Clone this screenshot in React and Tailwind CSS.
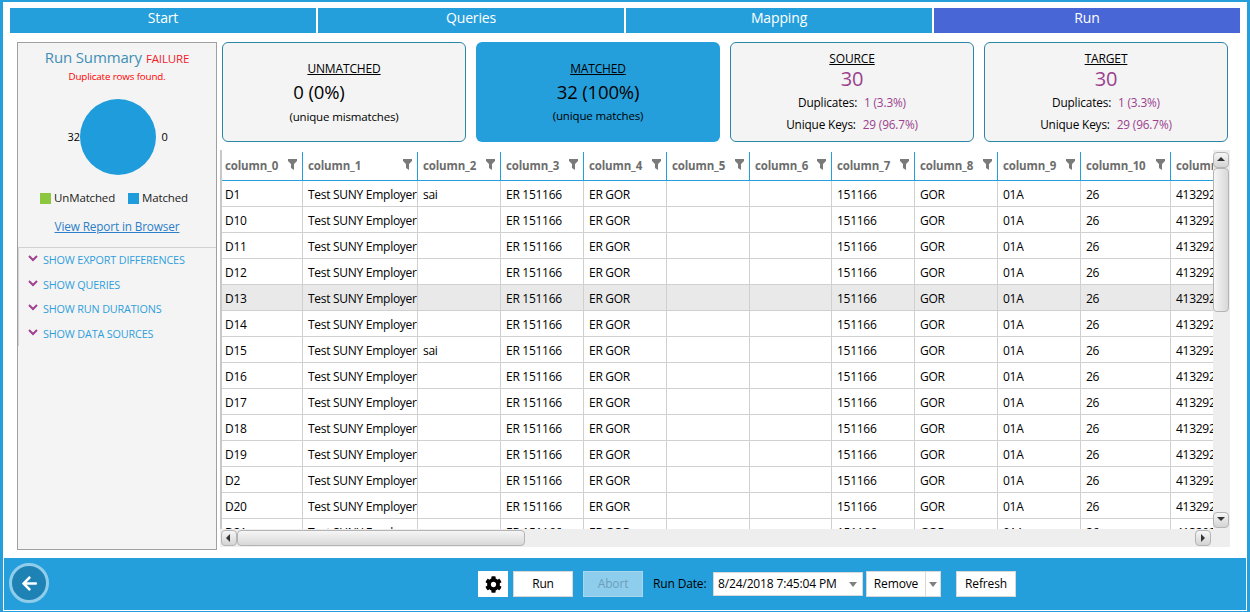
import { FaCog, FaArrowLeft } from "react-icons/fa";

const columns = [
  { name: "column_0", w: "w-[81px]" },
  { name: "column_1", w: "w-[115px]" },
  { name: "column_2", w: "w-[83px]" },
  { name: "column_3", w: "w-[83px]" },
  { name: "column_4", w: "w-[83px]" },
  { name: "column_5", w: "w-[83px]" },
  { name: "column_6", w: "w-[82px]" },
  { name: "column_7", w: "w-[83px]" },
  { name: "column_8", w: "w-[83px]" },
  { name: "column_9", w: "w-[83px]" },
  { name: "column_10", w: "w-[90px]" },
  { name: "column_11", w: "w-[80px]" },
];

const rowIds = ["D1", "D10", "D11", "D12", "D13", "D14", "D15", "D16", "D17", "D18", "D19", "D2", "D20", "D21"];

function rowCells(id) {
  return [id, "Test SUNY Employer", id === "D1" || id === "D15" ? "sai" : "", "ER 151166", "ER GOR", "", "", "151166", "GOR", "01A", "26", "4132924"];
}

function Funnel() {
  return (
    <svg width="9" height="11" viewBox="0 0 9 11" className="shrink-0">
      <path d="M0 0H9V2L6 5V11L3 9V5L0 2Z" fill="#7a7a7a" />
    </svg>
  );
}

function ScrollButton({ dir }) {
  const points = { up: "1,6 5,2 9,6", down: "1,2 5,6 9,2", left: "6,1 2,5 6,9", right: "3,1 7,5 3,9" };
  return (
    <div className="w-4 h-4 shrink-0 flex items-center justify-center rounded-sm border border-[#b4b4b4] bg-gradient-to-b from-[#f6f6f6] to-[#d4d4d4]">
      <svg width="10" height="10" viewBox="0 0 10 10">
        <polygon points={points[dir]} fill="#333" />
      </svg>
    </div>
  );
}

function StatCard({ title, count }) {
  return (
    <div className="w-[244px] h-[100px] rounded-md border border-[#2b86a6] bg-[#f4f4f4] flex flex-col items-center pt-[7px] text-black">
      <div className="text-[12px] leading-[17px] underline">{title}</div>
      <div className="text-[20px] leading-[24px] text-[#9b3f8e]">{count}</div>
      <div className="text-[11.8px] leading-[22px]">
        Duplicates: <span className="ml-1 text-[#9b3f8e]">1 (3.3%)</span>
      </div>
      <div className="text-[11.8px] leading-[22px]">
        Unique Keys: <span className="ml-1 text-[#9b3f8e]">29 (96.7%)</span>
      </div>
    </div>
  );
}

function Expander({ label }) {
  return (
    <div className="flex items-center h-[24.5px] pl-[9px] text-[10.8px] text-[#2f9fdc]">
      <svg width="10" height="7" viewBox="0 0 10 7" className="mr-[5px] mb-[3px]">
        <path d="M1 1L5 5L9 1" fill="none" stroke="#a0408f" strokeWidth="2" />
      </svg>
      {label}
    </div>
  );
}

function FooterButton({ children, disabled }) {
  return (
    <div className={disabled
      ? "w-[60px] h-[26px] flex items-center justify-center border border-[#a9d6ee] bg-[#8ecdec] text-[#6d9fb9]"
      : "w-[60px] h-[26px] flex items-center justify-center border border-[#d8d8d8] bg-white"}>
      {children}
    </div>
  );
}

export default function App() {
  return (
    <div className="w-[1250px] h-[612px] flex flex-col bg-white border-l-[3px] border-r-[3px] border-t-2 border-b border-[#259fdb] overflow-hidden text-[12px] tracking-[-0.15px] text-black font-['Open_Sans','Noto_Sans',sans-serif]">
      {/* tabs */}
      <div className="flex gap-[2px] mt-[6px] ml-[7px] text-white text-[14px] leading-[20px] text-center">
        <div className="w-[306px] h-[25px] bg-[#259fdb]">Start</div>
        <div className="w-[306px] h-[25px] bg-[#259fdb]">Queries</div>
        <div className="w-[306px] h-[25px] bg-[#259fdb]">Mapping</div>
        <div className="w-[306px] h-[25px] bg-[#4866d6]">Run</div>
      </div>

      <div className="flex mt-[9px] ml-[14px] h-[508px]">
        {/* run summary */}
        <div className="w-[200px] h-[508px] border border-[#a0a0a0] bg-[#f4f4f4] flex flex-col">
          <div className="flex items-baseline justify-center mt-[3px]">
            <span className="text-[15px] leading-[22px] text-[#3f8fb5]">Run Summary</span>
            <span className="ml-1 text-[11.5px] text-[#f01c2c]">FAILURE</span>
          </div>
          <div className="text-center text-[9.8px] leading-[14px] text-[#ff0000] mt-[2px]">Duplicate rows found.</div>
          <div className="flex items-center justify-center mt-[15px] h-[76px] pl-[7px] text-[11px]">
            <span className="w-[12px]">32</span>
            <div className="w-[76px] h-[76px] rounded-full bg-[#1e9cdc]" />
            <span className="w-[12px] ml-[6px]">0</span>
          </div>
          <div className="flex items-center justify-center mt-[16px] pr-[6px] h-[14px] text-[11.5px] text-[#222]">
            <div className="w-[11px] h-[11px] bg-[#8dc63f] mr-[3px]" />
            UnMatched
            <div className="w-[11px] h-[11px] bg-[#1e9cdc] ml-[13px] mr-[3px]" />
            Matched
          </div>
          <div className="text-center mt-[13px] text-[11.8px] leading-[16px] underline text-[#2c7fc9]">View Report in Browser</div>
          <div className="mt-[13px] border-t border-l border-[#d2d2d2] h-[99px]">
            <Expander label="SHOW EXPORT DIFFERENCES" />
            <Expander label="SHOW QUERIES" />
            <Expander label="SHOW RUN DURATIONS" />
            <Expander label="SHOW DATA SOURCES" />
          </div>
        </div>

        <div className="ml-[3px] w-[1010px] flex flex-col">
          {/* stat cards */}
          <div className="flex gap-[10px] ml-[2px]">
            <div className="w-[244px] h-[100px] rounded-md border border-[#2b86a6] bg-[#f4f4f4] flex flex-col items-center pt-[16px]">
              <div className="underline leading-[20px]">UNMATCHED</div>
              <div className="text-[18.5px] leading-[26px] pr-[50px]">0 (0%)</div>
              <div className="text-[11.5px] leading-[20px] mt-[2px]">(unique mismatches)</div>
            </div>
            <div className="w-[244px] h-[100px] rounded-md bg-[#259fdb] flex flex-col items-center pt-[17px]">
              <div className="underline leading-[20px]">MATCHED</div>
              <div className="text-[18.5px] leading-[26px]">32 (100%)</div>
              <div className="text-[11.5px] leading-[20px] mt-[1px]">(unique matches)</div>
            </div>
            <StatCard title="SOURCE" count="30" />
            <StatCard title="TARGET" count="30" />
          </div>

          {/* data grid */}
          <div className="mt-[8px] w-[1010px] flex h-[379px]">
            <div className="w-[993px] overflow-hidden border-l-2 border-[#c8c8c8]">
              <div className="flex h-[31px] pt-[2px] border-b border-[#259fdb] font-bold text-[#6d6d6d] text-[11.5px]">
                {columns.map((c, i) => (
                  <div key={c.name} className={c.w + (i === 0 ? " pl-[3px]" : " pl-[5px]") + " shrink-0 flex items-center justify-between pr-[5px] border-r border-[#259fdb] overflow-hidden"}>
                    <span>{c.name}</span>
                    <div className="mb-[4px]"><Funnel /></div>
                  </div>
                ))}
              </div>
              {rowIds.map((id) => (
                <div key={id} className={id === "D13" ? "flex h-[26px] border-b border-[#d0d0d0] bg-[#e9e9e9] tracking-[-0.28px]" : "flex h-[26px] border-b border-[#d0d0d0] tracking-[-0.28px]"}>
                  {rowCells(id).map((text, i) => (
                    <div key={i} className={columns[i].w + (i === 0 ? " pl-[3px]" : " pl-[5px]") + " shrink-0 leading-[27px] whitespace-nowrap overflow-hidden border-r border-[#d0d0d0]"}>
                      {text}
                    </div>
                  ))}
                </div>
              ))}
            </div>
            <div className="w-[17px] bg-[#eeeeee] flex flex-col items-start pt-[2px] pb-[1px]">
              <ScrollButton dir="up" />
              <div className="w-4 h-[144px] rounded-sm border border-[#b4b4b4] bg-gradient-to-r from-[#f6f6f6] to-[#d8d8d8]" />
              <div className="flex-1" />
              <ScrollButton dir="down" />
            </div>
          </div>
          <div className="w-[1010px] h-[18px] bg-[#eeeeee] flex items-center pl-px">
            <ScrollButton dir="left" />
            <div className="w-[288px] h-4 rounded-sm border border-[#b4b4b4] bg-gradient-to-b from-[#f6f6f6] to-[#d8d8d8]" />
            <div className="ml-[670px]"><ScrollButton dir="right" /></div>
          </div>
        </div>
      </div>

      {/* footer */}
      <div className="mt-[8px] h-[53px] flex items-center bg-[#259fdb] border-l border-r border-b border-white">
        <div className="ml-[5px] mb-[2px] w-10 h-10 rounded-full bg-[#1f82b5] border-[3px] border-[#8fcdea] flex items-center justify-center text-white text-[17px]">
          <FaArrowLeft />
        </div>
        <div className="ml-[429px] w-[30px] h-[26px] bg-white flex items-center justify-center text-[17px]">
          <FaCog />
        </div>
        <div className="ml-[5px]"><FooterButton>Run</FooterButton></div>
        <div className="ml-[10px]"><FooterButton disabled>Abort</FooterButton></div>
        <span className="ml-[10px] w-[60px]">Run Date:</span>
        <div className="w-[150px] h-[24px] bg-white flex items-center justify-between pl-[4px] pr-[5px] border border-[#d8d8d8]">
          <span>8/24/2018 7:45:04 PM</span>
          <svg width="8" height="5" viewBox="0 0 8 5"><path d="M0 0H8L4 5Z" fill="#808080" /></svg>
        </div>
        <div className="ml-[3px] w-[75px] h-[26px] bg-white flex items-center border border-[#d8d8d8]">
          <span className="w-[58px] text-center">Remove</span>
          <div className="flex-1 h-full flex items-center justify-center border-l border-[#d8d8d8]">
            <svg width="8" height="5" viewBox="0 0 8 5"><path d="M0 0H8L4 5Z" fill="#808080" /></svg>
          </div>
        </div>
        <div className="ml-[15px]"><FooterButton>Refresh</FooterButton></div>
      </div>
    </div>
  );
}
